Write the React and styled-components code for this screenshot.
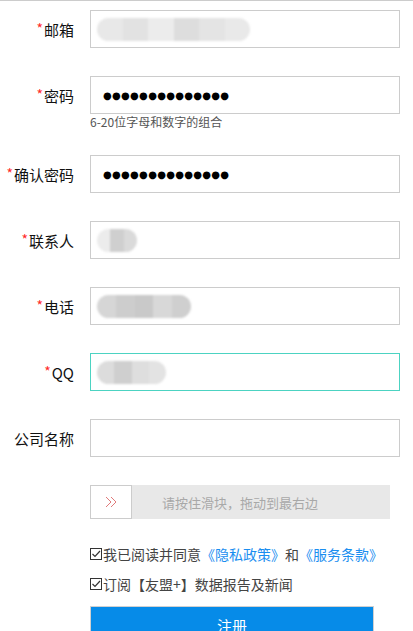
import React from 'react';
import styled, { createGlobalStyle } from 'styled-components';

const GlobalStyle = createGlobalStyle`
  html, body {
    margin: 0;
    padding: 0;
    background: #fff;
  }
  body {
    font-family: "Noto Sans CJK SC", "Noto Sans", sans-serif;
    color: #222;
  }
`;

const fields = [
  { label: '邮箱', required: true, blob: { w: 153, shades: ['#e8e8e8', '#e2e2e2', '#ececec', '#dddddd', '#e4e4e4', '#e9e9e9'] } },
  { label: '密码', required: true, dots: 14, hint: '6-20位字母和数字的组合' },
  { label: '确认密码', required: true, dots: 14 },
  { label: '联系人', required: true, blob: { w: 40, shades: ['#ececec', '#cfcfcf', '#dadada'] } },
  { label: '电话', required: true, blob: { w: 94, shades: ['#d6d6d6', '#cdcdcd', '#c9c9c9', '#d8d8d8', '#cfcfcf'] } },
  { label: 'QQ', required: true, focused: true, blob: { w: 69, shades: ['#dcdcdc', '#cfcfcf', '#dedede', '#e3e3e3'] } },
  { label: '公司名称', required: false },
];

function CheckMark() {
  return (
    <Box>
      <svg width="10" height="10" viewBox="0 0 10 10">
        <path d="M1.5 5l2.5 2.5L9 2" fill="none" stroke="#333" strokeWidth="1.2" />
      </svg>
    </Box>
  );
}

function App() {
  return (
    <Page>
      <GlobalStyle />
      <Form>
        {fields.map(f => (
          <Row key={f.label} $hint={!!f.hint}>
            <Label>
              {f.required && <Star>*</Star>}
              {f.label}
            </Label>
            <div>
              <Field $focused={f.focused}>
                {f.dots && <Dots>{'●'.repeat(f.dots)}</Dots>}
                {f.blob && (
                  <Blob style={{ width: f.blob.w }}>
                    {f.blob.shades.map((c, i) => (
                      <BlobCell key={i} style={{ background: c }} />
                    ))}
                  </Blob>
                )}
              </Field>
              {f.hint && <Hint>{f.hint}</Hint>}
            </div>
          </Row>
        ))}
        <Row>
          <span />
          <Slider>
            <Handle>
              <svg width="14" height="12" viewBox="0 0 14 12">
                <path d="M2 1l5 5-5 5M7 1l5 5-5 5" fill="none" stroke="#e07a7a" strokeWidth="1" />
              </svg>
            </Handle>
            <SliderText>请按住滑块，拖动到最右边</SliderText>
          </Slider>
        </Row>
        <Agree>
          <Check>
            <CheckMark />
            我已阅读并同意<Link>《隐私政策》</Link>和<Link>《服务条款》</Link>
          </Check>
          <Check>
            <CheckMark />
            订阅【友盟+】数据报告及新闻
          </Check>
        </Agree>
        <Submit>注册</Submit>
      </Form>
    </Page>
  );
}

const Page = styled.div`
  width: 413px;
  height: 631px;
  overflow: hidden;
  border-top: 1px solid #cccccc;
  box-sizing: border-box;
`;

const Form = styled.div`
  padding-top: 9px;
`;

const Row = styled.div`
  display: grid;
  grid-template-columns: 90px 310px;
  align-items: start;
  margin-bottom: ${p => (p.$hint ? '12px' : '28px')};
`;

const Label = styled.label`
  display: flex;
  justify-content: flex-end;
  align-items: center;
  height: 38px;
  padding-right: 16px;
  font-size: 15px;
  color: #111;
`;

const Star = styled.span`
  color: #ff2a2a;
  font-size: 14px;
  margin-right: 1px;
  position: relative;
  top: -1px;
`;

const Field = styled.div`
  box-sizing: border-box;
  height: 38px;
  border: 1px solid ${p => (p.$focused ? '#4cd3c2' : '#cccccc')};
  display: flex;
  align-items: center;
  padding-left: 6px;
  background: #fff;
`;

const Dots = styled.span`
  font-family: "DejaVu Sans", sans-serif;
  font-size: 10px;
  letter-spacing: 0.3px;
  color: #000;
  padding-left: 6px;
`;

const Blob = styled.div`
  display: flex;
  height: 23px;
  border-radius: 12px;
  overflow: hidden;
  filter: blur(0.8px);
`;

const BlobCell = styled.div`
  flex: 1;
`;

const Hint = styled.div`
  font-size: 12px;
  line-height: 14px;
  color: #555;
  margin-top: 1px;
  margin-bottom: 14px;
`;

const Slider = styled.div`
  position: relative;
  display: flex;
  align-items: center;
  width: 300px;
  height: 34px;
  background: #e8e8e8;
`;

const Handle = styled.div`
  box-sizing: border-box;
  width: 42px;
  height: 34px;
  border: 1px solid #cccccc;
  background: #fff;
  display: flex;
  align-items: center;
  justify-content: center;
  position: relative;
  z-index: 1;
`;

const SliderText = styled.div`
  position: absolute;
  inset: 0;
  display: flex;
  align-items: center;
  justify-content: center;
  font-size: 13px;
  color: #a8a8a8;
`;

const Agree = styled.div`
  padding-left: 90px;
  margin-top: -8px;
`;

const Check = styled.div`
  display: flex;
  align-items: center;
  height: 30px;
  font-size: 14px;
  color: #444;
`;

const Box = styled.span`
  box-sizing: border-box;
  width: 12px;
  height: 12px;
  border: 1px solid #333;
  display: flex;
  align-items: center;
  justify-content: center;
  margin-right: 1px;
`;

const Link = styled.span`
  color: #1a8ef0;
`;

const Submit = styled.button`
  display: flex;
  align-items: center;
  justify-content: center;
  margin: 7px 0 0 90px;
  padding: 0;
  width: 284px;
  height: 38px;
  border: 1px solid #d0d0d0;
  background: #068be8;
  color: #fff;
  font-family: "Noto Sans CJK SC", sans-serif;
  font-size: 15px;
`;

export default App;
